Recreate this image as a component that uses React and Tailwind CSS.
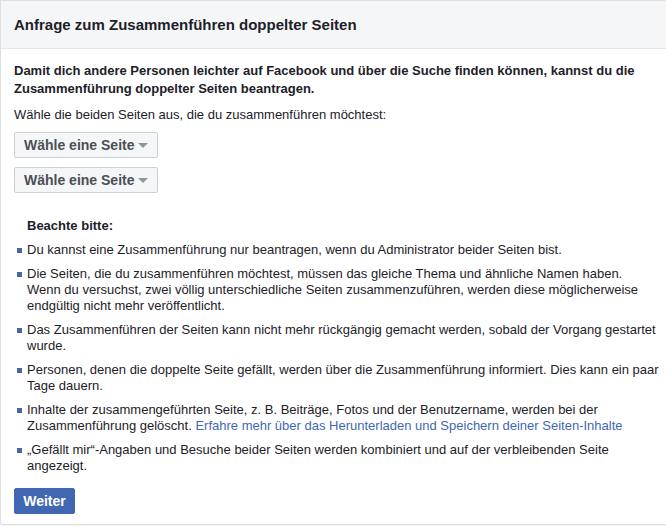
import React from "react";

function PageSelect() {
    return (
        <button
            type="button"
            className="flex h-[26px] items-center self-start whitespace-nowrap rounded-[2px] border border-[#ccd0d5] bg-[#f5f6f7] pl-[9px] pr-[9px] text-[14px] font-bold text-[#4b4f56]"
        >
            <span>Wähle eine Seite</span>
            <span className="ml-[4px] mt-[1px] h-0 w-0 border-x-[5px] border-t-[5px] border-x-transparent border-t-[#90949c]" />
        </button>
    );
}

function Item({ children }) {
    return (
        <li className="flex">
            <span className="mt-[6px] ml-[3px] mr-[5px] h-[5px] w-[5px] shrink-0 bg-[#4a64a5]" />
            <span>{children}</span>
        </li>
    );
}

export default function App() {
    return (
        <div
            className="h-[529px] w-[666px] overflow-hidden bg-white text-[#1d2129]"
            style={{ fontFamily: '"Liberation Sans", Arial, sans-serif' }}
        >
            <div className="rounded-bl-[3px] border-b border-l border-t border-[#dddfe2] bg-white shadow-[0_1px_1px_rgba(0,0,0,0.04)]">
                <div className="flex h-[48px] items-center border-b border-[#e5e5e5] bg-[#f5f6f7] pl-[13px] pt-[2px]">
                    <h2 className="text-[15px] font-bold">Anfrage zum Zusammenführen doppelter Seiten</h2>
                </div>

                <div className="pl-[13px] pr-[8px] pt-[13px] pb-[10px]">
                    <p className="whitespace-nowrap text-[13px] font-bold leading-[18px]">
                        Damit dich andere Personen leichter auf Facebook und über die Suche finden können, kannst du die
                        <br />
                        Zusammenführung doppelter Seiten beantragen.
                    </p>
                    <p className="mt-[9px] text-[13px] leading-[16px]">
                        Wähle die beiden Seiten aus, die du zusammenführen möchtest:
                    </p>

                    <div className="mt-[9px] flex flex-col gap-[9px]">
                        <PageSelect />
                        <PageSelect />
                    </div>

                    <h3 className="mt-[25px] pl-[13px] text-[13px] font-bold leading-[16px]">Beachte bitte:</h3>

                    <ul className="mt-[8px] flex flex-col gap-[8px] whitespace-nowrap text-[13px] leading-[16px]">
                        <Item>Du kannst eine Zusammenführung nur beantragen, wenn du Administrator beider Seiten bist.</Item>
                        <Item>
                            Die Seiten, die du zusammenführen möchtest, müssen das gleiche Thema und ähnliche Namen haben.
                            <br />
                            Wenn du versuchst, zwei völlig unterschiedliche Seiten zusammenzuführen, werden diese möglicherweise
                            <br />
                            endgültig nicht mehr veröffentlicht.
                        </Item>
                        <Item>
                            Das Zusammenführen der Seiten kann nicht mehr rückgängig gemacht werden, sobald der Vorgang gestartet
                            <br />
                            wurde.
                        </Item>
                        <Item>
                            Personen, denen die doppelte Seite gefällt, werden über die Zusammenführung informiert. Dies kann ein paar
                            <br />
                            Tage dauern.
                        </Item>
                        <Item>
                            Inhalte der zusammengeführten Seite, z. B. Beiträge, Fotos und der Benutzername, werden bei der
                            <br />
                            Zusammenführung gelöscht.{" "}
                            <a href="#" className="text-[#4267b2]">
                                Erfahre mehr über das Herunterladen und Speichern deiner Seiten-Inhalte
                            </a>
                        </Item>
                        <Item>
                            „Gefällt mir“-Angaben und Besuche beider Seiten werden kombiniert und auf der verbleibenden Seite
                            <br />
                            angezeigt.
                        </Item>
                    </ul>

                    <button
                        type="button"
                        className="mt-[14px] h-[26px] w-[61px] rounded-[2px] border border-[#4267b2] bg-[#4267b2] text-[14px] font-bold text-white"
                    >
                        Weiter
                    </button>
                </div>
            </div>
        </div>
    );
}
